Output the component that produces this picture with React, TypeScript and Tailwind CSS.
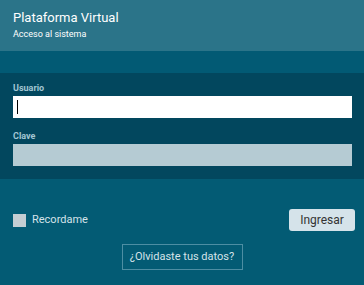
export default function App() {
    return (
        <div className="w-[364px] h-[285px] flex flex-col bg-[#035b74] font-['Roboto',sans-serif] overflow-hidden">
            <header className="h-[51px] bg-[#2b7489] px-[13px] pt-[9px]">
                <h1 className="text-[13px] leading-[17px] text-white">
                    Plataforma Virtual
                </h1>
                <p className="text-[9px] leading-[12px] mt-[2px] text-white">
                    Acceso al sistema
                </p>
            </header>
            <div className="h-[22px] bg-[#025a74]" />
            <section className="bg-[#02475e] px-[13px] pt-[9px] pb-[13px] flex flex-col">
                <label className="text-[9px] leading-[12px] font-bold text-[#a3c6d3]">
                    Usuario
                </label>
                <div className="mt-[2px] h-[22px] w-[339px] bg-white flex items-center pl-[4px]">
                    <div className="w-[1px] h-[14px] bg-black" />
                </div>
                <label className="mt-[12px] text-[9px] leading-[12px] font-bold text-[#a3c6d3]">
                    Clave
                </label>
                <div className="mt-[2px] h-[22px] w-[339px] bg-[#b5cbd3]" />
            </section>
            <section className="flex-1 px-[13px] pt-[30px] flex flex-col">
                <div className="flex items-center justify-between">
                    <div className="flex items-center gap-[6px]">
                        <div className="w-[13px] h-[13px] bg-[#c4ced3]" />
                        <span className="text-[11px] text-[#d5e3e9]">Recordame</span>
                    </div>
                    <button className="-mr-[4px] h-[22px] w-[66px] rounded-[3px] bg-[#d5e3ea] text-[12px] text-[#333]">
                        Ingresar
                    </button>
                </div>
                <div className="flex justify-center mt-[13px]">
                    <button className="h-[26px] w-[121px] border border-[#4d8ea3] text-[11px] text-[#d5e3e9]">
                        ¿Olvidaste tus datos?
                    </button>
                </div>
            </section>
        </div>
    )
}
